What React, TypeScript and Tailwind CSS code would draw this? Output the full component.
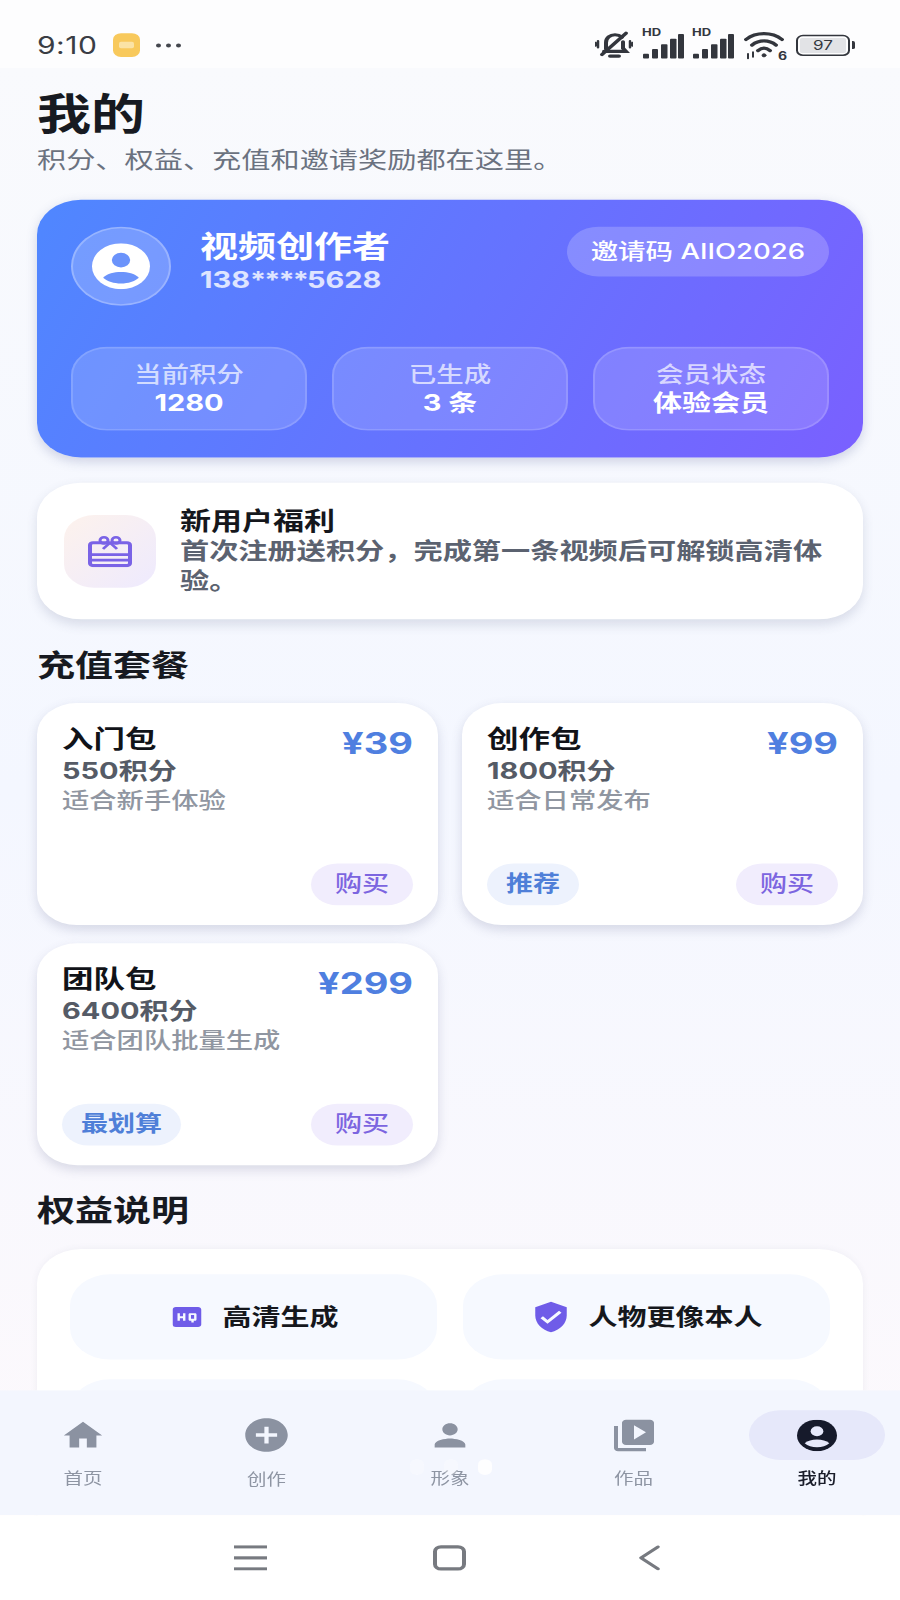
import { MdHome, MdAddCircle, MdPerson, MdVideoLibrary, MdHighQuality, MdVerifiedUser } from 'react-icons/md';

const plans = [
  { name: '入门包', points: '550积分', desc: '适合新手体验', price: '¥39', tag: '' },
  { name: '创作包', points: '1800积分', desc: '适合日常发布', price: '¥99', tag: '推荐' },
  { name: '团队包', points: '6400积分', desc: '适合团队批量生成', price: '¥299', tag: '最划算' },
];

const stats = [
  { label: '当前积分', value: '1280' },
  { label: '已生成', value: '3 条' },
  { label: '会员状态', value: '体验会员' },
];

const AccountIcon = ({ className, inner }: { className: string; inner: string }) => (
  <svg viewBox="0 0 24 24" className={className}>
    <circle cx="12" cy="12" r="12" fill="currentColor" />
    <circle cx="12" cy="8.8" r="3.8" fill={inner} />
    <path d="M4.6 18C6.4 15.8 9 15 12 15S17.6 15.8 19.4 18C17.6 20 15 21 12 21S6.4 20 4.6 18Z" fill={inner} />
  </svg>
);

const SignalIcon = () => (
  <div className="relative h-[38px] w-[42px]">
    <span className="absolute -top-[4px] left-0 text-[13px] leading-[14px] font-bold text-[#33363d]">HD</span>
    <svg viewBox="0 0 42 38" className="h-[38px] w-[42px] fill-[#33363d]">
      <rect x="1" y="30" width="6" height="6" rx="1" />
      <rect x="10" y="24" width="6" height="12" rx="1" />
      <rect x="19" y="18" width="6.5" height="18" rx="1" />
      <rect x="28" y="11" width="6.5" height="25" rx="1" />
      <rect x="36" y="5" width="6" height="31" rx="1" />
    </svg>
  </div>
);

const StatusBar = () => (
  <div className="flex h-[86px] shrink-0 items-center justify-between bg-[#fdfdfe] pt-[30px] pr-[45px] pb-[2px] pl-[37px]">
    <div className="flex items-center">
      <span className="text-[30px] leading-none font-normal tracking-[0.5px] text-[#3a3d44]">9:10</span>
      <div className="ml-[16px] flex h-[30px] w-[27px] items-center justify-center rounded-[8px] bg-[#f8c95c]">
        <div className="h-[8px] w-[15px] rounded-[2px] bg-[#fbe3a6]" />
      </div>
      <div className="ml-[16px] flex gap-[5px]">
        <div className="size-[5px] rounded-full bg-[#44474e]" />
        <div className="size-[5px] rounded-full bg-[#44474e]" />
        <div className="size-[5px] rounded-full bg-[#44474e]" />
      </div>
    </div>
    <div className="flex items-center">
      <svg viewBox="0 0 38 38" className="h-[38px] w-[38px]" fill="none" stroke="#33363d" strokeWidth="4" strokeLinecap="round">
        <path d="M11 24V16C11 10 15 6 20 6C23 6 25 7 27 9" />
        <path d="M28 15V23L31 27H9" />
        <path d="M15 33H24" />
        <path d="M7 31L31 4" />
        <path d="M3 14V22M35 14V22M0.5 16V20M37.5 16V20" strokeWidth="2.5" />
      </svg>
      <div className="ml-[9px]"><SignalIcon /></div>
      <div className="ml-[8px]"><SignalIcon /></div>
      <div className="relative ml-[10px] h-[38px] w-[40px]">
        <svg viewBox="0 0 40 38" className="h-[38px] w-[40px]" fill="none" stroke="#33363d" strokeWidth="4" strokeLinecap="round">
          <path d="M2 12C12 2 28 2 38 12" />
          <path d="M8 19C15 12 25 12 32 19" />
          <path d="M14 26C18 22 22 22 26 26" />
          <circle cx="20" cy="32" r="2" fill="#33363d" strokeWidth="1" />
          <path d="M4 30V36M9 28V34" strokeWidth="2" />
        </svg>
        <span className="absolute -right-[3px] -bottom-[2px] text-[14px] leading-[14px] font-bold text-[#33363d]">6</span>
      </div>
      <div className="ml-[12px] flex items-center">
        <div className="flex h-[27px] w-[54px] items-center justify-center rounded-[7px] border-[2.5px] border-[#33363d] p-[2px]">
          <div className="flex h-full w-full items-center justify-center rounded-[2px] bg-[#e2e3e6] text-[17px] leading-none text-[#33363d]">97</div>
        </div>
        <div className="ml-[2px] h-[10px] w-[3px] rounded-r-[2px] bg-[#33363d]" />
      </div>
    </div>
  </div>
);

const HeroCard = () => (
  <div className="mt-[32px] flex h-[326px] flex-col justify-between rounded-[44px] bg-linear-[115deg] from-[#4f87ff] to-[#7a60ff] px-[34px] pt-[34px] pb-[34px] shadow-[0_5px_12px_rgba(70,80,140,0.22)]">
    <div className="flex items-start">
      <div className="flex size-[100px] items-center justify-center rounded-full border-2 border-white/25 bg-white/20">
        <AccountIcon className="size-[58px] text-white" inner="#6b93fb" />
      </div>
      <div className="ml-[29px] flex flex-col">
        <span className="text-[38px] leading-[48px] font-semibold text-white">视频创作者</span>
        <span className="text-[29px] leading-[40px] font-bold text-white/80">
          138<span className="tracking-[-2px]">****</span>5628
        </span>
      </div>
      <div className="ml-auto flex h-[63px] items-center rounded-full bg-white/20 px-[24px] text-[27.5px] font-medium whitespace-nowrap text-white">
        邀请码 AIIO2026
      </div>
    </div>
    <div className="grid grid-cols-3 gap-[25px]">
      {stats.map((s) => (
        <div key={s.label} className="flex h-[106px] flex-col items-center justify-center rounded-[36px] border-2 border-white/15 bg-white/15">
          <span className="text-[27.5px] leading-[36px] font-medium text-white/70">{s.label}</span>
          <span className="text-[29px] leading-[36px] font-bold text-white">{s.value}</span>
        </div>
      ))}
    </div>
  </div>
);

const BenefitCard = () => (
  <div className="mt-[32px] flex h-[173px] items-center rounded-[44px] bg-white pr-[27px] pl-[27px] shadow-[0_6px_12px_rgba(70,80,120,0.16)]">
    <div className="flex h-[92px] w-[92px] shrink-0 items-center justify-center rounded-[30px] bg-linear-to-br from-[#fdf2ec] to-[#eeeafe]">
      <svg viewBox="0 0 44 40" className="h-[40px] w-[44px]" fill="none" stroke="#7a63e6" strokeWidth="4">
        <rect x="2" y="9" width="40" height="29" rx="3" />
        <path d="M2 24H42M2 31H42" strokeWidth="3.6" />
        <path d="M22 9L15 17M22 9L29 17" strokeWidth="3" />
        <circle cx="16" cy="6" r="4" strokeWidth="3" />
        <circle cx="28" cy="6" r="4" strokeWidth="3" />
      </svg>
    </div>
    <div className="ml-[24px] flex flex-col">
      <span className="text-[31px] leading-[38px] font-bold text-[#15171c]">新用户福利</span>
      <span className="text-[29.2px] leading-[38px] font-semibold text-[#5b6270]">首次注册送积分，完成第一条视频后可解锁高清体验。</span>
    </div>
  </div>
);

const PlanCard = ({ plan }: { plan: (typeof plans)[0] }) => (
  <div className="flex h-[281px] flex-col justify-between rounded-[40px] bg-white px-[25px] pt-[26px] pb-[25px] shadow-[0_6px_12px_rgba(70,80,120,0.18)]">
    <div className="flex items-start justify-between">
      <div className="flex flex-col">
        <span className="text-[31.5px] leading-[40px] font-bold text-[#111318]">{plan.name}</span>
        <span className="text-[29px] leading-[39px] font-bold text-[#555b66]">{plan.points}</span>
        <span className="text-[27.3px] leading-[38px] font-medium text-[#9096a1]">{plan.desc}</span>
      </div>
      <span className="text-[38px] leading-[48px] font-bold text-[#4f7fe0]">{plan.price}</span>
    </div>
    <div className="flex items-center justify-between">
      {plan.tag ? (
        <span className="flex h-[53px] items-center rounded-full bg-[#edf2fd] px-[19px] text-[27px] font-semibold text-[#4f7fd8]">{plan.tag}</span>
      ) : (
        <span />
      )}
      <span className="flex h-[53px] items-center rounded-full bg-[#f1edfd] px-[24px] text-[27px] font-medium text-[#7c65e0]">购买</span>
    </div>
  </div>
);

const RightsCard = () => (
  <div className="mt-[25px] h-[420px] rounded-[44px] bg-white px-[33px] pt-[32px] shadow-[0_1px_8px_rgba(70,80,120,0.07)]">
    <div className="grid grid-cols-2 gap-x-[26px] gap-y-[25px]">
      <div className="flex h-[108px] items-center justify-center rounded-[40px] bg-[#f6f9ff]">
        <MdHighQuality className="h-[44px] w-[38px] text-[#6f5ce8]" />
        <span className="ml-[16px] text-[29px] font-bold text-[#15171c]">高清生成</span>
      </div>
      <div className="flex h-[108px] items-center justify-center rounded-[40px] bg-[#f6f9ff]">
        <MdVerifiedUser className="size-[42px] text-[#6f5ce8]" />
        <span className="ml-[16px] text-[29px] font-bold text-[#15171c]">人物更像本人</span>
      </div>
      <div className="h-[108px] rounded-[40px] bg-[#f6f9ff]" />
      <div className="h-[108px] rounded-[40px] bg-[#f6f9ff]" />
    </div>
  </div>
);

const BottomNav = () => {
  const tabs = [
    { label: '首页', icon: <MdHome className="size-[46px] text-[#8b92a1]" />, labelClass: 'mt-[8px]' },
    { label: '创作', icon: <MdAddCircle className="size-[51px] text-[#8b92a1]" />, labelClass: 'mt-[10px]' },
    { label: '形象', icon: <MdPerson className="size-[46px] text-[#8b92a1]" />, labelClass: 'mt-[8px]' },
    { label: '作品', icon: <MdVideoLibrary className="size-[48px] text-[#8b92a1]" />, labelClass: 'mt-[8px]' },
  ];
  return (
    <div className="absolute right-0 bottom-0 left-0 flex h-[158px] justify-between bg-[#f2f5fe]/95 px-[15px] pt-[25px] backdrop-blur-sm">
      {tabs.map((t) => (
        <div key={t.label} className="flex w-[136px] flex-col items-center">
          <div className="flex h-[63px] items-center">{t.icon}</div>
          <span className={`${t.labelClass} text-[19.5px] leading-[30px] text-[#8e95a3]`}>{t.label}</span>
        </div>
      ))}
      <div className="flex w-[136px] flex-col items-center">
        <div className="flex h-[63px] w-full items-center justify-center rounded-full bg-[#e6e8fa]">
          <AccountIcon className="size-[40px] text-[#161a2b]" inner="#e6e8fa" />
        </div>
        <span className="mt-[8px] text-[19.5px] leading-[30px] font-medium text-[#1a1d2a]">我的</span>
      </div>
      {/* page dots showing through */}
      <div className="absolute top-[87px] left-[410px] flex gap-[20px]">
        <div className="h-[20px] w-[14px] rounded-full bg-white/30" />
        <div className="h-[20px] w-[14px] rounded-full bg-white/30" />
        <div className="h-[20px] w-[14px] rounded-full bg-white/90" />
      </div>
    </div>
  );
};

const SystemBar = () => (
  <div className="flex h-[108px] shrink-0 items-center bg-white pl-[234px]">
    <svg viewBox="0 0 33 32" className="h-[32px] w-[33px] fill-[#777a80]">
      <rect y="0" width="33" height="4" />
      <rect y="14" width="33" height="4" />
      <rect y="28" width="33" height="4" />
    </svg>
    <div className="ml-[166px] h-[32px] w-[33px] rounded-[8px] border-[4px] border-[#777a80]" />
    <svg viewBox="0 0 22 32" className="ml-[172px] h-[32px] w-[22px]" fill="none" stroke="#777a80" strokeWidth="3.5" strokeLinecap="round" strokeLinejoin="round">
      <path d="M20 2L3 16L20 30" />
    </svg>
  </div>
);

const App = () => {
  return (
    <div className="h-[1600px] w-[900px] overflow-hidden bg-white">
      {/* the whole reference is squashed vertically, so the page is built tall and scaled on y */}
      <div className="flex h-[2026px] w-[900px] origin-top scale-y-[0.79] flex-col [font-family:Inter,'Noto_Sans_CJK_SC',sans-serif]">
        <StatusBar />
        <div className="relative flex-1 overflow-hidden bg-linear-to-b from-[#f9fafd] via-[#f4f7ff] to-[#fdf9fc]">
          <div className="px-[37px]">
            <div className="pt-[27px]">
              <h1 className="text-[54px] leading-[64px] font-bold text-[#171a21]">我的</h1>
              <p className="mt-[8px] text-[29.2px] leading-[36px] text-[#6b7280]">积分、权益、充值和邀请奖励都在这里。</p>
            </div>
            <HeroCard />
            <BenefitCard />
            <h2 className="mt-[34px] text-[38px] leading-[48px] font-semibold text-[#171a21]">充值套餐</h2>
            <div className="mt-[24px] grid grid-cols-2 gap-x-[24px] gap-y-[23px]">
              {plans.map((p) => (
                <PlanCard key={p.name} plan={p} />
              ))}
            </div>
            <h2 className="mt-[33px] text-[38px] leading-[48px] font-semibold text-[#171a21]">权益说明</h2>
            <RightsCard />
          </div>
          <BottomNav />
        </div>
        <SystemBar />
      </div>
    </div>
  );
};

export default App;
